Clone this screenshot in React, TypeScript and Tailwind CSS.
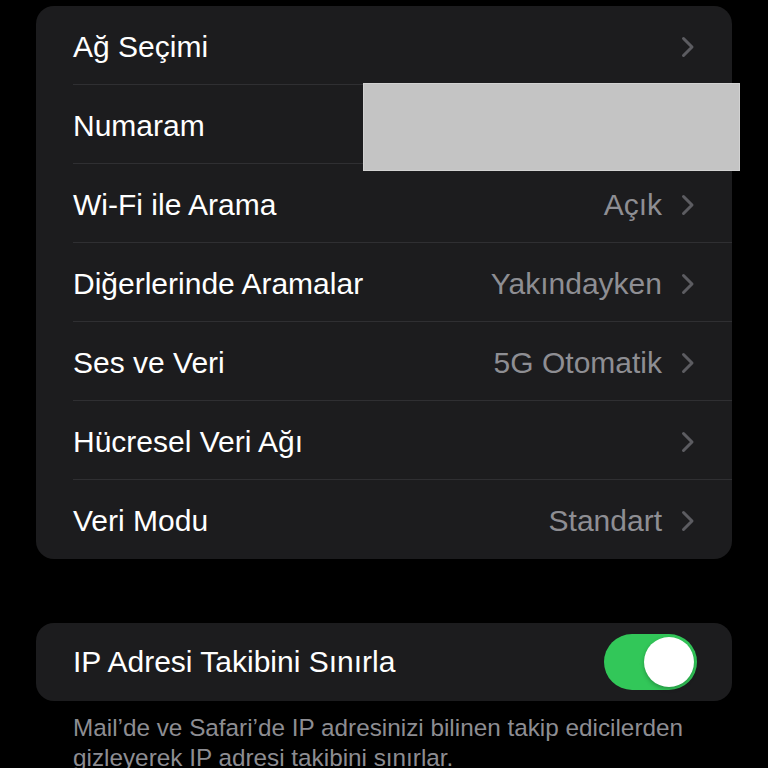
const rows: { label: string; value?: string; chevron?: boolean }[] = [
  { label: 'Ağ Seçimi', chevron: true },
  { label: 'Numaram' },
  { label: 'Wi-Fi ile Arama', value: 'Açık', chevron: true },
  { label: 'Diğerlerinde Aramalar', value: 'Yakındayken', chevron: true },
  { label: 'Ses ve Veri', value: '5G Otomatik', chevron: true },
  { label: 'Hücresel Veri Ağı', chevron: true },
  { label: 'Veri Modu', value: 'Standart', chevron: true },
]

function Chevron() {
  return (
    <svg width="14" height="22" viewBox="0 0 14 22" fill="none" className="shrink-0">
      <path d="M2.5 2.5 L11 11 L2.5 19.5" stroke="#5c5c61" strokeWidth="3" strokeLinecap="round" strokeLinejoin="round" />
    </svg>
  )
}

function Toggle() {
  return (
    <div className="flex h-[56px] w-[93px] items-center justify-end rounded-full bg-[#32c759] p-[3px]">
      <div className="h-[50px] w-[50px] rounded-full bg-white shadow-[0_2px_4px_rgba(0,0,0,0.25)]" />
    </div>
  )
}

export default function App() {
  return (
    <div
      className="relative min-h-[768px] w-[768px] overflow-hidden bg-black px-[36px] pt-[6px] text-white"
      style={{ fontFamily: '"Liberation Sans", Arial, sans-serif' }}
    >
      <div className="overflow-hidden rounded-[18px] bg-[#1c1c1e]">
        {rows.map((row, i) => (
          <div key={row.label} className="pl-[37px]">
            <div
              className={
                'flex h-[79px] items-center justify-between pr-[37px] pt-[3px] ' +
                (i < rows.length - 1 ? 'border-b border-[#2f2f32]' : '')
              }
            >
              <span className="text-[30px] leading-none">{row.label}</span>
              <div className="flex items-center gap-[19px]">
                {row.value && <span className="text-[30px] leading-none text-[#8e8e93]">{row.value}</span>}
                {row.chevron && <Chevron />}
              </div>
            </div>
          </div>
        ))}
      </div>

      <div className="mt-[64px] flex h-[78px] items-center justify-between rounded-[18px] bg-[#1c1c1e] pl-[37px] pr-[35px]">
        <span className="text-[30px] leading-none">IP Adresi Takibini Sınırla</span>
        <Toggle />
      </div>

      <p className="px-[37px] pt-[12px] text-[24.3px] leading-[30px] text-[#8d8d92]">
        Mail’de ve Safari’de IP adresinizi bilinen takip edicilerden gizleyerek IP adresi takibini sınırlar.
      </p>

      {/* redaction block over the phone number */}
      <div className="absolute left-[363px] top-[83px] h-[88px] w-[377px] border border-[#d2d2d2] bg-[#c4c4c4]" />
    </div>
  )
}
